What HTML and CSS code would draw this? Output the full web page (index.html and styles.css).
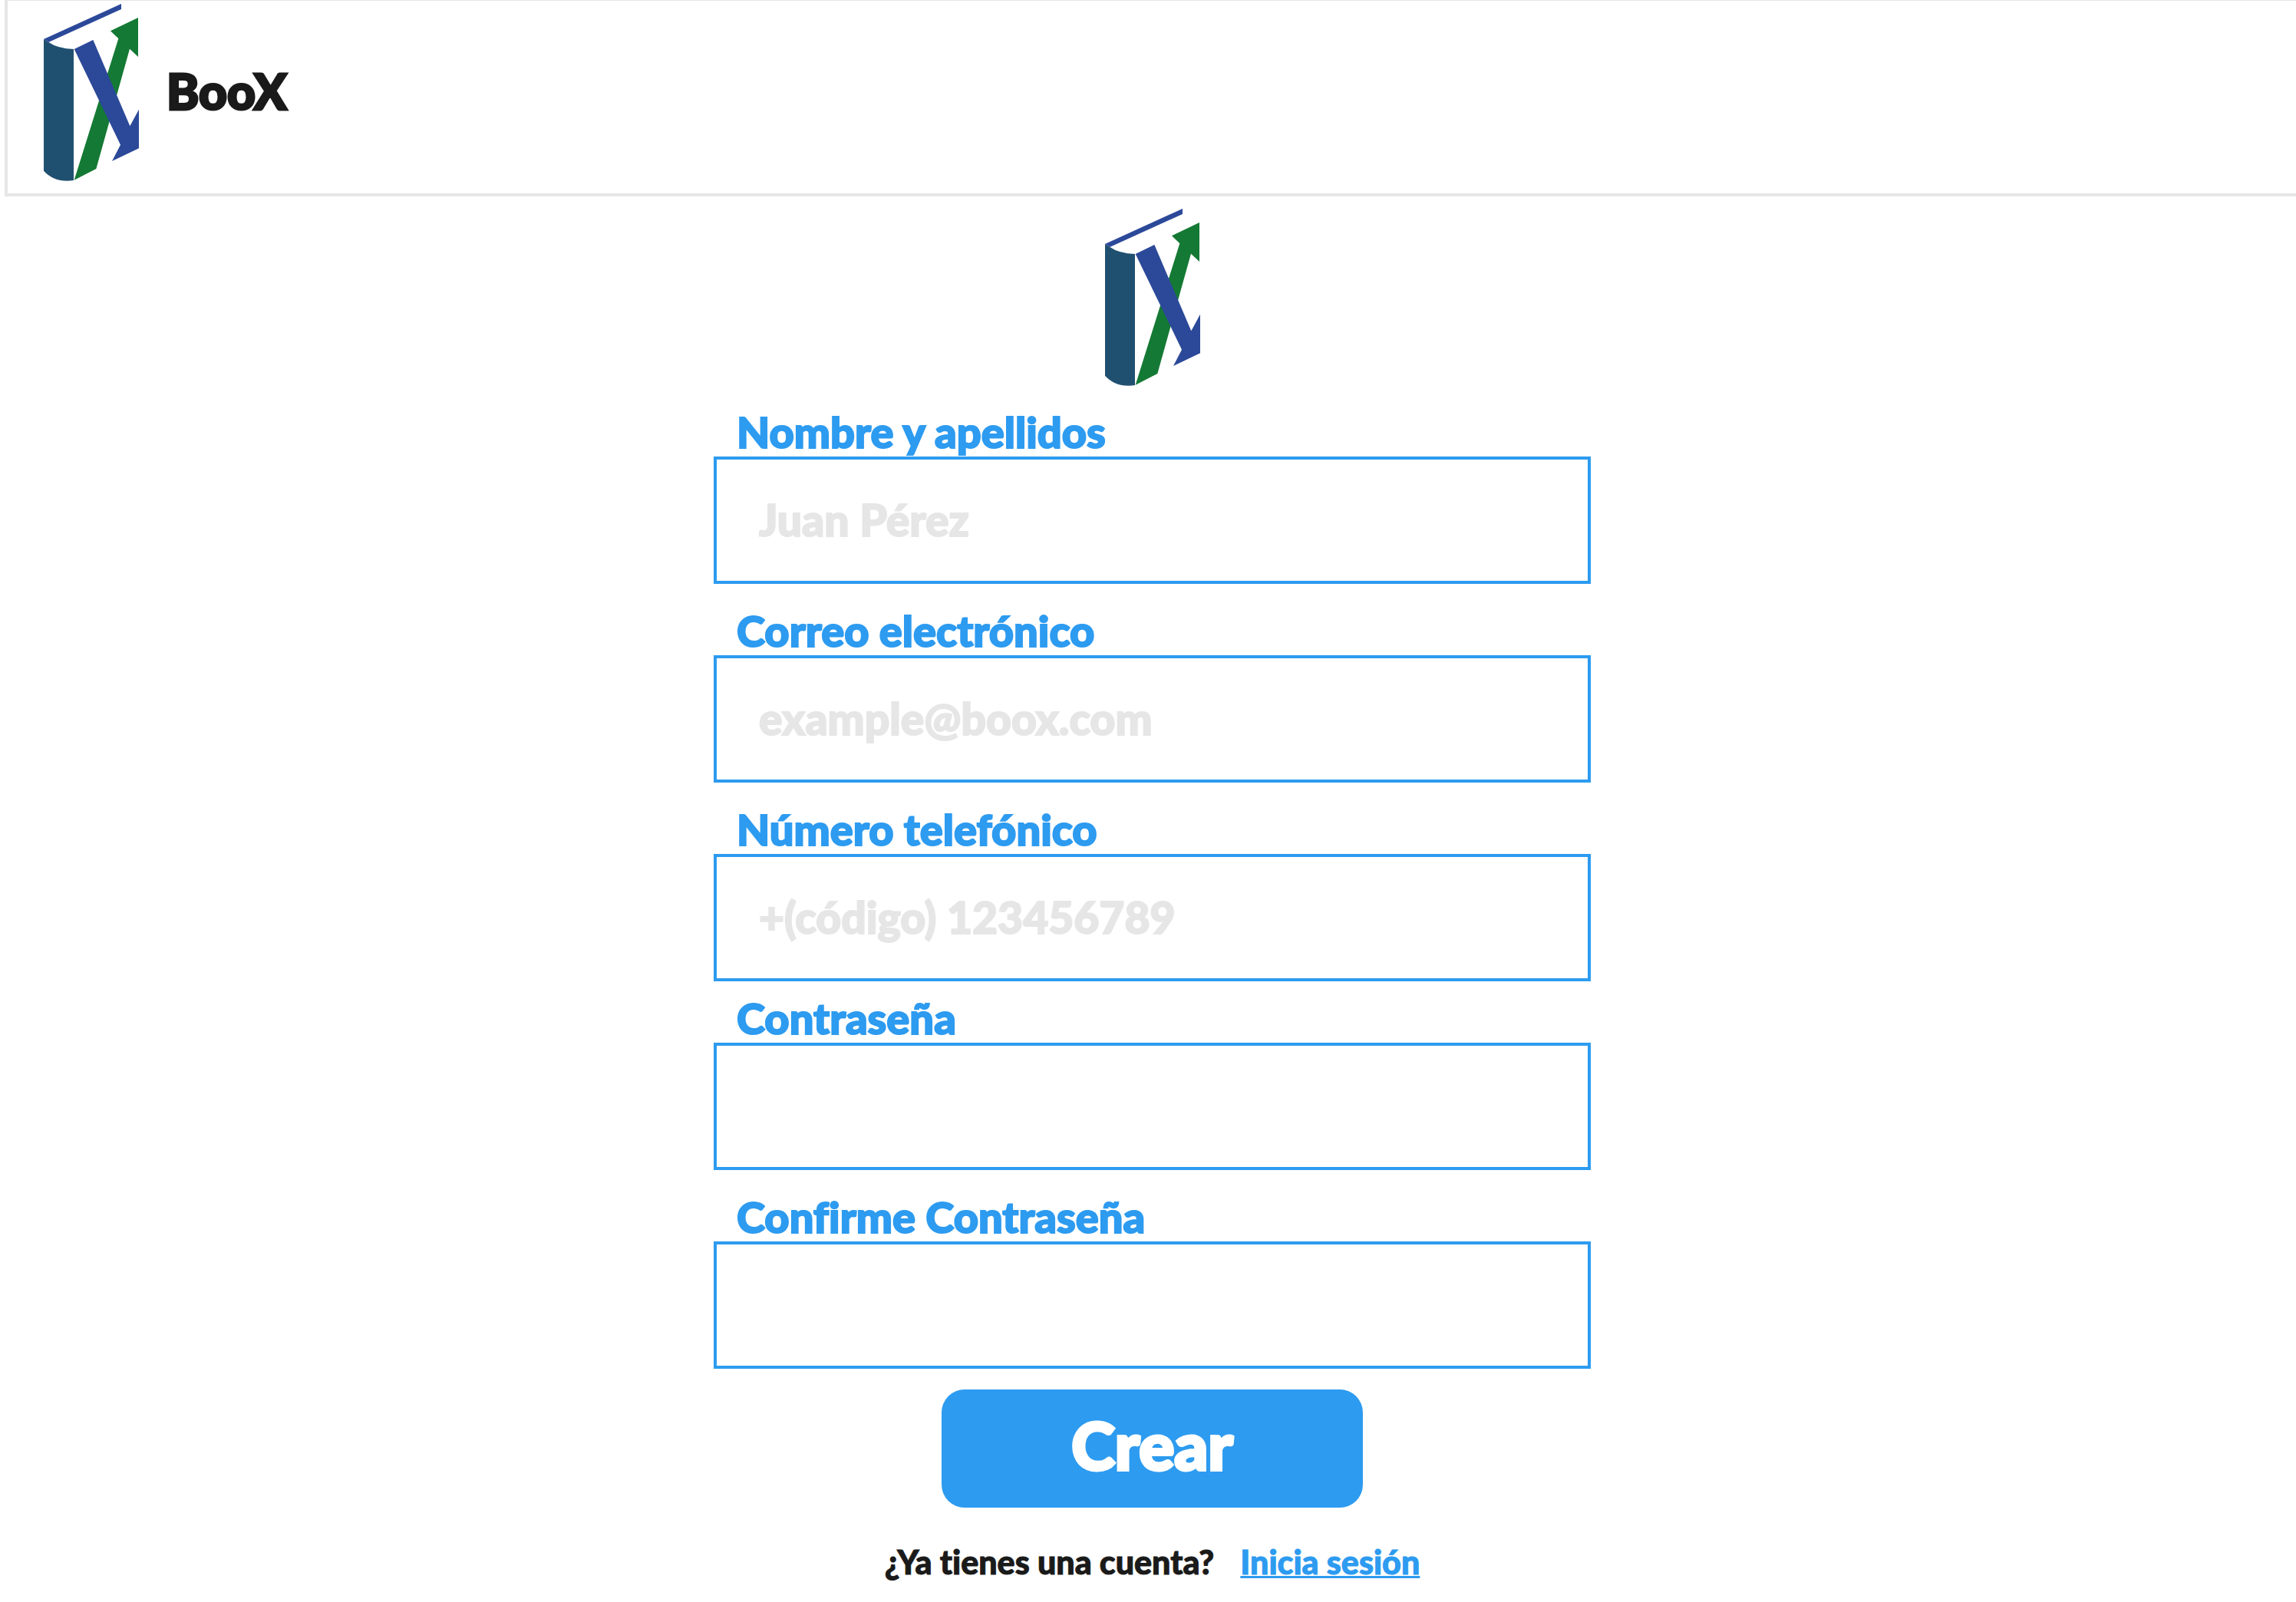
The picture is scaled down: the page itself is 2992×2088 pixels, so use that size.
FILE: index.html
```html
<!DOCTYPE html>
<html lang="es">
<head>
<meta charset="utf-8">
<meta name="viewport" content="width=device-width, initial-scale=1">
<title>BooX</title>
<link rel="stylesheet" href="styles.css">
</head>
<body>
<svg class="symbols" aria-hidden="true">
  <symbol id="logo" viewBox="171 15 372 693">
    <path fill="#205070" d="M171 153L190 165Q225 190 288 192V705Q215 716 171 668Z"/>
    <path fill="#2c4999" d="M171 153L474 15V36L190 165Z"/>
    <path fill="#147934" d="M290 704L463 151L432 121L540 69V222L507 191L376 660Z"/>
    <path fill="#2c4999" d="M290 192L364 156L508 493L543 428V580L438 630L471 566Z"/>
  </symbol>
</svg>
<header class="topbar">
  <svg class="logo" role="img" aria-label="Logo"><use href="#logo"/></svg>
  <span class="brand">BooX</span>
</header>
<main class="page">
  <svg class="logo" role="img" aria-label="Logo"><use href="#logo"/></svg>
  <form class="form">
    <div class="group">
      <div class="field">
        <label class="label" for="name">Nombre y apellidos</label>
        <input class="input" id="name" type="text" placeholder="Juan Pérez">
      </div>
      <div class="field">
        <label class="label" for="email">Correo electrónico</label>
        <input class="input" id="email" type="email" placeholder="example@boox.com">
      </div>
      <div class="field">
        <label class="label" for="phone">Número telefónico</label>
        <input class="input" id="phone" type="tel" placeholder="+(código) 123456789">
      </div>
    </div>
    <div class="group">
      <div class="field">
        <label class="label" for="password">Contraseña</label>
        <input class="input" id="password" type="password">
      </div>
      <div class="field">
        <label class="label" for="confirm">Confirme Contraseña</label>
        <input class="input" id="confirm" type="password">
      </div>
    </div>
    <button class="submit" type="submit">Crear</button>
  </form>
  <p class="signin"><span>¿Ya tienes una cuenta?</span><a class="link" href="#">Inicia sesión</a></p>
</main>
</body>
</html>
```
FILE: styles.css
```css
* {
  box-sizing: border-box;
}

body {
  margin: 0 0 0 6px;
  background: #fff;
  color: #1a1a1a;
  font-family: Lato, "Open Sans", sans-serif;
  font-weight: 900;
  font-variant-ligatures: none;
  stroke-linejoin: round;
  -webkit-text-stroke: 2px currentColor;
}

.symbols {
  display: none;
}

.topbar {
  display: flex;
  align-items: flex-start;
  gap: 36px;
  padding: 4px 47px 16px;
  border: 4px solid #e6e6e6;
  border-top-width: 1px;
  border-right: 0;
}

.logo {
  display: block;
  flex: none;
  width: 124px;
  height: 231px;
}

.brand {
  padding-top: 76px;
  font-size: 64px;
  line-height: 76px;
  -webkit-text-stroke-width: 3px;
}

.page {
  display: flex;
  flex-direction: column;
  align-items: center;
  padding: 16px 0 4px 5px;
}

.form {
  display: flex;
  flex-direction: column;
  align-items: center;
  gap: 16px;
  width: 100%;
  max-width: 1143px;
  margin-top: 28px;
}

.group {
  display: flex;
  flex-direction: column;
  gap: 29px;
  width: 100%;
}

.field {
  display: flex;
  flex-direction: column;
}

.label {
  padding-left: 30px;
  color: #2d9bf0;
  font-size: 56px;
  line-height: 64px;
}

.input {
  width: 100%;
  height: 166px;
  padding: 0 55px 2px;
  border: 4px solid #2d9bf0;
  border-radius: 0;
  background: transparent;
  color: #1a1a1a;
  font: inherit;
  font-size: 57px;
}

.input::placeholder {
  color: #e6e6e6;
  opacity: 1;
}

.submit {
  width: 549px;
  height: 154px;
  margin-top: 11px;
  padding-bottom: 12px;
  border: 0;
  border-radius: 30px;
  background: #2d9bf0;
  color: #fff;
  font: inherit;
  font-size: 86px;
  -webkit-text-stroke-width: 4px;
}

.signin {
  display: flex;
  gap: 34px;
  margin: 47px 0 0;
  font-size: 43px;
  line-height: 48px;
  -webkit-text-stroke-width: 1px;
}

.link {
  color: #2d9bf0;
  text-decoration-thickness: 3px;
}
```
